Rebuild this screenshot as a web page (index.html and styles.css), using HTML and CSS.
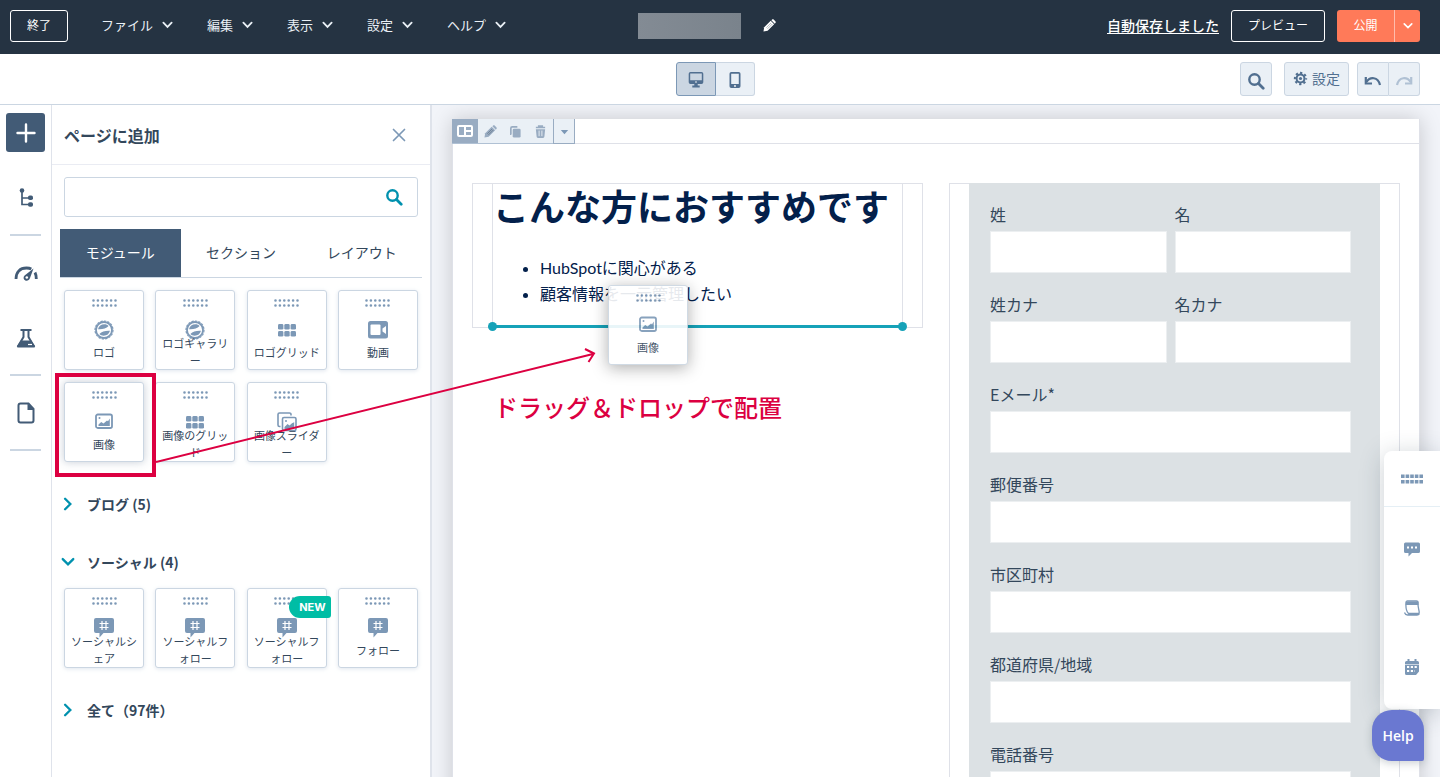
FILE: index.html
```
<!DOCTYPE html>
<html lang="ja">
<head>
    <meta charset="UTF-8">
    <meta name="viewport" content="width=device-width, initial-scale=1.0">
    <title>ページエディター</title>
    <link rel="stylesheet" href="styles.css">
</head>
<body>
    <!-- shared icons -->
    <svg class="sprite" aria-hidden="true">
        <symbol id="chevron" viewBox="0 0 12 8"><path d="M1.5 1.5 6 6l4.500-4.500" fill="none" stroke="currentColor" stroke-width="2" stroke-linecap="round"/></symbol>
        <symbol id="search" viewBox="0 0 18 18"><circle cx="7.500" cy="7.500" r="5.200" fill="none" stroke="currentColor" stroke-width="2.400"/><path d="m11.500 11.500 4.700 4.700" stroke="currentColor" stroke-width="2.800" stroke-linecap="round"/></symbol>
        <symbol id="pencil" viewBox="0 0 14 14"><path d="M.5 13.500 1.300 9 8.300 2l3.700 3.700L5 12.700z" fill="currentColor"/><path d="m9 1.300.6-.6c.6-.6 1.500-.6 2.100 0l1.600 1.600c.6.600.6 1.500 0 2.100l-.6.600z" fill="currentColor"/><path d="m3.600 9.400 5.200-5.200M4.800 10.600 10 5.400" stroke="#253342" stroke-width=".6" opacity=".6"/></symbol>
        <symbol id="dots" viewBox="0 0 25 8"><path d="M1.500 1.500h22.500M1.500 6.500h22.500" fill="none" stroke="#7c98b6" stroke-width="2.600" stroke-linecap="round" stroke-dasharray="0 4.400"/></symbol>
        <symbol id="logo" viewBox="0 0 20 20"><circle cx="10" cy="10" r="8" fill="none" stroke="#7c98b6" stroke-width="1.800"/><circle cx="10" cy="10" r="9" fill="none" stroke="#7c98b6" stroke-width="1.200" stroke-dasharray="2.400 1.100"/><path d="M4 9.200C4.800 6 7.200 4.300 10.300 4.300c1.900 0 3.300.6 4.300 1.700-2.500 2.400-6 3.500-10.600 3.200zM16 10.800c-.8 3.200-3.200 4.900-6.300 4.900-1.900 0-3.300-.6-4.300-1.700 2.500-2.400 6-3.500 10.600-3.200z" fill="#7c98b6"/></symbol>
        <symbol id="grid" viewBox="0 0 20 20"><g fill="#7c98b6"><rect x="1" y="4" width="5.400" height="5.600" rx="1.400"/><rect x="7.300" y="4" width="5.400" height="5.600" rx="1.400"/><rect x="13.600" y="4" width="5.400" height="5.600" rx="1.400"/><rect x="1" y="11" width="5.400" height="5.600" rx="1.400"/><rect x="7.300" y="11" width="5.400" height="5.600" rx="1.400"/><rect x="13.600" y="11" width="5.400" height="5.600" rx="1.400"/></g></symbol>
        <symbol id="video" viewBox="0 0 20 20"><rect y="1" width="20" height="17.500" rx="2.500" fill="#7c98b6"/><rect x="2.500" y="4.500" width="10" height="10.500" rx="1" fill="#fff"/><path d="M18 6v8l-3.500-2.500v-3z" fill="#fff"/></symbol>
        <symbol id="image" viewBox="0 0 20 20"><rect x="2" y="2.500" width="16" height="13.500" rx="1.800" fill="none" stroke="#7c98b6" stroke-width="1.800"/><path d="M4.500 14v-1.500L7.200 10l2.300 1.600 3.500-3 1 .6L15.800 6.500V14z" fill="#7c98b6"/><circle cx="5.500" cy="6" r="1" fill="#7c98b6"/></symbol>
        <symbol id="slider" viewBox="0 0 20 20"><path d="M3.500 14.500H2.500a1.500 1.500 0 0 1-1.500-1.500V2.500A1.500 1.500 0 0 1 2.500 1H12.500A1.500 1.500 0 0 1 14 2.500v1" fill="none" stroke="#7c98b6" stroke-width="1.600"/><rect x="5.500" y="5.500" width="13.500" height="13" rx="1.500" fill="none" stroke="#7c98b6" stroke-width="1.600"/><path d="M7.500 17v-2l3-3 2 1.600 2.500-2.400 2.200-1V17z" fill="#7c98b6"/><circle cx="9" cy="9" r="1" fill="#7c98b6"/></symbol>
        <symbol id="social" viewBox="0 0 20 20"><path d="M2 0h16a2 2 0 0 1 2 2v11a2 2 0 0 1-2 2H9.500L5.500 19.500V15H2a2 2 0 0 1-2-2V2a2 2 0 0 1 2-2z" fill="#7c98b6"/><path d="M8 3v9M12 3v9M5.500 5.500h9M5.500 9.500h9" stroke="#fff" stroke-width="1.200"/></symbol>
    </svg>

    <header class="topbar">
        <div class="topbar-left">
            <button class="btn-outline btn-exit">終了</button>
            <nav class="menu">
                <button>ファイル<svg><use href="#chevron"/></svg></button>
                <button>編集<svg><use href="#chevron"/></svg></button>
                <button>表示<svg><use href="#chevron"/></svg></button>
                <button>設定<svg><use href="#chevron"/></svg></button>
                <button>ヘルプ<svg><use href="#chevron"/></svg></button>
            </nav>
        </div>
        <div class="page-name">
            <span class="name-mask"></span>
            <button class="edit-name" aria-label="名前を編集"><svg><use href="#pencil"/></svg></button>
        </div>
        <div class="topbar-right">
            <a href="#" class="saved">自動保存しました</a>
            <button class="btn-outline btn-preview">プレビュー</button>
            <div class="publish">
                <button class="publish-main">公開</button>
                <button class="publish-more" aria-label="公開オプション"><svg><use href="#chevron"/></svg></button>
            </div>
        </div>
    </header>

    <div class="toolbar">
        <div class="device-switch">
            <button class="active" aria-label="デスクトップ"><svg viewBox="0 0 16 16"><path d="M2.500 0h11A1.800 1.800 0 0 1 15.300 1.800v8.400A1.800 1.800 0 0 1 13.500 12h-11A1.800 1.800 0 0 1 .7 10.200V1.800A1.800 1.800 0 0 1 2.500 0zM2.200 1.500v6.700h11.600V1.500zM6.300 12h3.400v1.500h2V15.500H4.300v-2h2z" fill="#516f90" fill-rule="evenodd"/><circle cx="8" cy="10" r=".8" fill="#fff"/></svg></button>
            <button aria-label="モバイル"><svg viewBox="0 0 16 16"><path d="M4.300 0h7.400a1.800 1.800 0 0 1 1.800 1.800v12.400a1.800 1.800 0 0 1-1.800 1.800H4.300a1.800 1.800 0 0 1-1.800-1.800V1.800A1.800 1.800 0 0 1 4.300 0zM4.200 1.800v10.200h7.600V1.800z" fill="#516f90" fill-rule="evenodd"/><circle cx="8" cy="14" r=".9" fill="#fff"/></svg></button>
        </div>
        <div class="tools">
            <button class="tool tool-search" aria-label="検索"><svg><use href="#search"/></svg></button>
            <button class="tool tool-settings"><svg viewBox="0 0 16 16"><circle cx="8" cy="8" r="4.200" fill="none" stroke="#516f90" stroke-width="2.200"/><circle cx="8" cy="8" r="6" fill="none" stroke="#516f90" stroke-width="2.200" stroke-dasharray="2.400 2.310" stroke-dashoffset="1.200"/><circle cx="8" cy="8" r="1.700" fill="#516f90"/></svg>設定</button>
            <div class="history">
                <button class="tool" aria-label="元に戻す"><svg viewBox="0 0 18 12"><path d="M2.500 7C6 1.500 14 1.500 16 10" fill="none" stroke="#516f90" stroke-width="2.200"/><path d="M1.800 2v6.500H8" fill="none" stroke="#516f90" stroke-width="2.200"/></svg></button>
                <button class="tool" aria-label="やり直す" disabled><svg viewBox="0 0 18 12"><path d="M15.500 7C12 1.500 4 1.500 2 10" fill="none" stroke="#b0c1d4" stroke-width="2.200"/><path d="M16.200 2v6.500H10" fill="none" stroke="#b0c1d4" stroke-width="2.200"/></svg></button>
            </div>
        </div>
    </div>

    <main class="editor">
        <nav class="rail">
            <button class="active" aria-label="追加"><svg viewBox="0 0 24 24"><path d="M12 3.500v17M3.500 12h17" stroke="#fff" stroke-width="2.400" stroke-linecap="round"/></svg></button>
            <button aria-label="コンテンツ構造"><svg viewBox="0 0 24 24"><path d="M8 5v13.500h9M8 12h9" fill="none" stroke="#425b76" stroke-width="1.700"/><circle cx="8" cy="4.500" r="2.300" fill="#425b76"/><rect x="14" y="9.500" width="5" height="4.500" rx="1.800" fill="#425b76"/><rect x="14" y="16.300" width="5" height="4.500" rx="1.800" fill="#425b76"/></svg></button>
            <hr>
            <button aria-label="最適化"><svg viewBox="0 0 24 24"><path d="M2 18c0-7 4-11 10.500-11 2 0 3.500.3 4.800 1M21 11.500c.9 1.800 1.300 3.900 1.300 6.500" fill="none" stroke="#425b76" stroke-width="2.800"/><path d="M19.500 7.500 16 17c-.8 2.200-2.800 3.300-4.700 2.400-2-1-2.300-3.400-.7-5z" fill="#425b76"/><circle cx="12.800" cy="16.500" r="1.300" fill="#fff"/></svg></button>
            <button aria-label="テスト"><svg viewBox="0 0 24 24"><path d="M6.500 4h11M9.500 4v7L4.500 19.500h15L14.500 11V4" fill="none" stroke="#425b76" stroke-width="2"/><path d="M7 14.500h10l3.800 5.200c.5.800 0 1.800-1 1.800H4.200c-1 0-1.500-1-1-1.800z" fill="#425b76"/><path d="M14 18.500h4" stroke="#fff" stroke-width="1.200"/></svg></button>
            <hr>
            <button aria-label="ページ"><svg viewBox="0 0 24 24"><path d="M6.500 2.500h8l5 5.500v11.500a2 2 0 0 1-2 2h-11a2 2 0 0 1-2-2v-15a2 2 0 0 1 2-2z" fill="none" stroke="#425b76" stroke-width="2"/><path d="M13.500 2.500v6.500H20z" fill="#425b76"/></svg></button>
            <hr>
        </nav>

        <aside class="panel">
            <div class="panel-header">
                <h2>ページに追加</h2>
                <button class="close" aria-label="閉じる"><svg viewBox="0 0 14 14"><path d="m1.500 1.500 11 11M12.500 1.500l-11 11" stroke="#7c98b6" stroke-width="1.700" stroke-linecap="round"/></svg></button>
            </div>
            <div class="search-box">
                <input type="text" aria-label="モジュールを検索">
                <svg><use href="#search"/></svg>
            </div>
            <div class="tabs" role="tablist">
                <button class="active" role="tab">モジュール</button>
                <button role="tab">セクション</button>
                <button role="tab">レイアウト</button>
            </div>
            <div class="modules">
                <div class="cards">
                    <button class="card"><svg class="grip"><use href="#dots"/></svg><svg class="icon"><use href="#logo"/></svg><span>ロゴ</span></button>
                    <button class="card"><svg class="grip"><use href="#dots"/></svg><svg class="icon"><use href="#logo"/></svg><span>ロゴギャラリー</span></button>
                    <button class="card"><svg class="grip"><use href="#dots"/></svg><svg class="icon"><use href="#grid"/></svg><span>ロゴグリッド</span></button>
                    <button class="card"><svg class="grip"><use href="#dots"/></svg><svg class="icon"><use href="#video"/></svg><span>動画</span></button>
                    <button class="card picked"><svg class="grip"><use href="#dots"/></svg><svg class="icon"><use href="#image"/></svg><span>画像</span></button>
                    <button class="card"><svg class="grip"><use href="#dots"/></svg><svg class="icon"><use href="#grid"/></svg><span>画像のグリッド</span></button>
                    <button class="card"><svg class="grip"><use href="#dots"/></svg><svg class="icon"><use href="#slider"/></svg><span>画像スライダー</span></button>
                </div>
                <h3><button><svg class="closed"><use href="#chevron"/></svg>ブログ (5)</button></h3>
                <h3><button><svg><use href="#chevron"/></svg>ソーシャル (4)</button></h3>
                <div class="cards cards-social">
                    <button class="card"><svg class="grip"><use href="#dots"/></svg><svg class="icon"><use href="#social"/></svg><span>ソーシャルシェア</span></button>
                    <button class="card"><svg class="grip"><use href="#dots"/></svg><svg class="icon"><use href="#social"/></svg><span>ソーシャルフォロー</span></button>
                    <button class="card"><svg class="grip"><use href="#dots"/></svg><svg class="icon"><use href="#social"/></svg><span>ソーシャルフォロー</span><em class="badge">NEW</em></button>
                    <button class="card"><svg class="grip"><use href="#dots"/></svg><svg class="icon"><use href="#social"/></svg><span>フォロー</span></button>
                </div>
                <h3><button><svg class="closed"><use href="#chevron"/></svg>全て（97件）</button></h3>
            </div>
        </aside>

        <section class="canvas">
            <div class="page">
                <div class="section-bar">
                    <button class="kind" aria-label="セクション"><svg viewBox="0 0 16 12"><path d="M2 0h12a2 2 0 0 1 2 2v8a2 2 0 0 1-2 2H2a2 2 0 0 1-2-2V2a2 2 0 0 1 2-2zM2 2v8h5V2zM9 2v3h5V2zM9 7v3h5V7z" fill="#fff" fill-rule="evenodd"/></svg></button>
                    <button aria-label="編集"><svg><use href="#pencil"/></svg></button>
                    <button aria-label="複製"><svg viewBox="0 0 14 14"><path d="M2.500 10H2V3.500A1.500 1.500 0 0 1 3.500 2H9" fill="none" stroke="#99acc2" stroke-width="1.800"/><rect x="4" y="4" width="8.500" height="9.500" rx="1.500" fill="#99acc2"/></svg></button>
                    <button aria-label="削除"><svg viewBox="0 0 14 14"><path d="M2 2.600h10M5 2.500V1h4v1.500" fill="none" stroke="#99acc2" stroke-width="1.600"/><path d="M2 4.500h10l-.8 8a1.500 1.500 0 0 1-1.500 1.500H4.300a1.500 1.500 0 0 1-1.500-1.500z" fill="#99acc2"/><path d="M5.500 6v6M8.500 6v6" stroke="#eaf0f6" stroke-width="1"/></svg></button>
                    <button class="more" aria-label="その他"><svg viewBox="0 0 14 14"><path d="M3 5.500h8L7 10z" fill="#7c98b6"/></svg></button>
                </div>
                <div class="row">
                    <div class="column">
                        <div class="rich-text">
                            <h1>こんな方におすすめです</h1>
                            <ul>
                                <li>HubSpotに関心がある</li>
                                <li>顧客情報を一元管理したい</li>
                            </ul>
                            <div class="drop-line"></div>
                        </div>
                    </div>
                    <div class="column">
                        <form class="form">
                            <div class="field half"><label for="lastname">姓</label><input type="text" id="lastname"></div>
                            <div class="field half"><label for="firstname">名</label><input type="text" id="firstname"></div>
                            <div class="field half"><label for="lastkana">姓カナ</label><input type="text" id="lastkana"></div>
                            <div class="field half"><label for="firstkana">名カナ</label><input type="text" id="firstkana"></div>
                            <div class="field"><label for="email">Eメール*</label><input type="email" id="email"></div>
                            <div class="field"><label for="zip">郵便番号</label><input type="text" id="zip"></div>
                            <div class="field"><label for="city">市区町村</label><input type="text" id="city"></div>
                            <div class="field"><label for="state">都道府県/地域</label><input type="text" id="state"></div>
                            <div class="field"><label for="phone">電話番号</label><input type="tel" id="phone"></div>
                        </form>
                    </div>
                </div>
            </div>
        </section>
    </main>

    <!-- module being dragged and the notes drawn over the editor -->
    <div class="card dragging"><svg class="grip"><use href="#dots"/></svg><svg class="icon"><use href="#image"/></svg><span>画像</span></div>
    <div class="highlight"></div>
    <svg class="arrow" viewBox="0 0 444 120"><path d="M0 114 437 6M429 1l9 4.500-5.500 8.500" fill="none" stroke="#dc0041" stroke-width="2"/></svg>
    <p class="note">ドラッグ＆ドロップで配置</p>

    <div class="side-dock">
        <button class="dock-grip" aria-label="移動"><svg viewBox="0 0 22 10"><path d="M0 2.300h22M0 7.700h22" stroke="#7c98b6" stroke-width="3.400" stroke-dasharray="3.600 1"/></svg></button>
        <button aria-label="コメント"><svg viewBox="0 0 16 16"><path d="M1.500 1.500h13A1.500 1.500 0 0 1 16 3v7.500a1.500 1.500 0 0 1-1.500 1.500H8l-3.500 3.500V12h-3A1.500 1.500 0 0 1 0 10.500V3a1.500 1.500 0 0 1 1.500-1.500z" fill="#7c98b6"/><path d="M3 6.500h10" stroke="#fff" stroke-width="2" stroke-dasharray="2 2"/></svg></button>
        <button aria-label="ノート"><svg viewBox="0 0 16 16"><path d="M2 2.500C2 1.500 2.500 1 3.500 1h9c1 0 1.500.5 1.500 1.500-.2 5 .8 6 1.200 9.500.1 1-.5 1.500-1.500 1.500H4.500C3 12 1.500 9 2 2.500zM.5 12.500c.5 1.800 1 2.500 3 2.500h9.500c1.500 0 2-.5 2.500-1.500" fill="none" stroke="#7c98b6" stroke-width="1.300"/><path d="M2 1.500h12.500V5H1.700z" fill="#7c98b6"/></svg></button>
        <button aria-label="カレンダー"><svg viewBox="0 0 16 16"><path d="M2.500 2h11A1.500 1.500 0 0 1 15 3.500V12.500L12 16H2.500A1.500 1.500 0 0 1 1 14.500v-11A1.500 1.500 0 0 1 2.500 2z" fill="#7c98b6"/><path d="M4.500 0v3M11.500 0v3" stroke="#7c98b6" stroke-width="2"/><path d="M3 8h10M3 12h8" stroke="#fff" stroke-width="2.200" stroke-dasharray="2.200 1.600"/><path d="M1 5.500h14" stroke="#fff" stroke-width=".6"/></svg></button>
    </div>
    <button class="help">Help</button>
</body>
</html>
```

FILE: styles.css
```
* {
    box-sizing: border-box;
}
body {
    margin: 0;
    height: 100vh;
    display: flex;
    flex-direction: column;
    overflow: hidden;
    position: relative;
    font-family: "Noto Sans CJK JP", sans-serif;
    font-size: 14px;
    color: #33475b;
    background: #fff;
}
button {
    font: inherit;
    color: inherit;
    background: none;
    border: none;
    padding: 0;
    cursor: pointer;
    display: flex;
    align-items: center;
    justify-content: center;
}
svg {
    flex-shrink: 0;
}
.sprite {
    position: absolute;
    width: 0;
    height: 0;
}

/* top bar */
.topbar,
.toolbar {
    display: grid;
    grid-template-columns: 1fr auto 1fr;
    align-items: center;
    padding: 0 20px 0 10px;
    flex-shrink: 0;
}
.topbar {
    height: 54px;
    padding-bottom: 3px;
    background: #253342;
    color: #fff;
    font-size: 13px;
}
.topbar-left,
.topbar-right,
.page-name,
.menu,
.publish,
.tools,
.history,
.device-switch {
    display: flex;
    align-items: center;
}
.btn-outline {
    height: 32px;
    padding-bottom: 2px;
    border: 1px solid #fff;
    border-radius: 3px;
    font-size: 12px;
}
.btn-exit {
    width: 58px;
}
.btn-preview {
    width: 94px;
    margin: 0 12px;
}
.menu {
    gap: 34px;
    margin-left: 33px;
}
.menu button {
    gap: 9px;
    padding-bottom: 2px;
    color: #eaf0f6;
}
.menu svg,
.publish svg {
    width: 12px;
    height: 8px;
}
.menu svg {
    width: 11px;
}
.name-mask {
    width: 103px;
    height: 26px;
    background: linear-gradient(90deg, #838b94, #7a838c);
}
.edit-name {
    padding: 0 16px;
    margin-left: 6px;
}
.edit-name svg,
.section-bar svg {
    width: 13px;
    height: 13px;
}
.topbar-right,
.tools {
    justify-content: flex-end;
}
.saved {
    padding-bottom: 2px;
    color: #fff;
    font-size: 14px;
    font-weight: 500;
    text-underline-offset: 2px;
}
.publish button {
    height: 32px;
    padding-bottom: 2px;
    background: #ff7a59;
    font-size: 12px;
}
.publish .publish-main {
    width: 58px;
    border-right: 1px solid #ffbcac;
    border-radius: 3px 0 0 3px;
}
.publish .publish-more {
    width: 25px;
    padding-bottom: 0;
    border-radius: 0 3px 3px 0;
}
.publish-more svg {
    width: 10px;
}

/* second bar */
.toolbar {
    height: 51px;
    border-bottom: 1px solid #cbd6e2;
}
.device-switch {
    grid-column: 2;
}
.device-switch button {
    width: 39px;
    height: 34px;
    background: #eaf0f6;
    border: 1px solid #cbd6e2;
    border-left: none;
    border-radius: 0 3px 3px 0;
}
.device-switch .active {
    width: 40px;
    background: #cbd6e2;
    border: 1px solid #7c98b6;
    border-radius: 3px 0 0 3px;
}
.device-switch svg {
    width: 16px;
    height: 16px;
    margin-top: 2px;
}
.tool {
    height: 34px;
    background: #eaf0f6;
    border: 1px solid #cbd6e2;
    border-radius: 3px;
    color: #516f90;
}
.tool-search {
    width: 32px;
    margin-right: 12px;
}
.tool-search svg {
    width: 18px;
    height: 18px;
    margin-top: 4px;
}
.tool-settings {
    width: 65px;
    gap: 4px;
    margin-right: 8px;
    padding-bottom: 2px;
}
.tool-settings svg {
    width: 15px;
    height: 15px;
}
.history .tool {
    width: 32px;
    border-radius: 3px 0 0 3px;
}
.history .tool + .tool {
    width: 31px;
    border-left: none;
    border-radius: 0 3px 3px 0;
}
.history svg {
    width: 18px;
    height: 12px;
    margin-top: 4px;
}

.editor {
    flex: 1;
    min-height: 0;
    display: flex;
}

/* icon rail */
.rail {
    width: 52px;
    flex-shrink: 0;
    padding: 8px 6px 0;
    border-right: 1px solid #dfe3eb;
}
.rail button {
    width: 39px;
    height: 39px;
    border-radius: 3px;
}
.rail button + button {
    margin-top: 26px;
}
.rail .active {
    background: #425b76;
}
.rail svg {
    width: 24px;
    height: 24px;
}
.rail hr {
    width: 31px;
    height: 2px;
    margin: 17px auto;
    border: none;
    background: #cbd6e2;
}

/* module panel */
.panel {
    width: 380px;
    flex-shrink: 0;
    border-right: 2px solid #dfe3eb;
    overflow: hidden;
}
.panel-header {
    height: 60px;
    padding: 0 24px 0 12px;
    display: flex;
    align-items: center;
    justify-content: space-between;
    border-bottom: 1px solid #eaecf3;
}
.panel-header h2 {
    margin: 0;
    font-size: 16px;
    font-weight: 700;
}
.close svg {
    width: 14px;
    height: 14px;
}
.search-box {
    margin: 12px 12px 0;
    height: 40px;
    display: flex;
    align-items: center;
    padding-right: 14px;
    border: 1px solid #cbd6e2;
    border-radius: 3px;
    color: #0091ae;
}
.search-box input {
    flex: 1;
    height: 36px;
    padding: 0 10px;
    border: none;
    outline: none;
    font: inherit;
}
.search-box svg {
    width: 18px;
    height: 18px;
}
.tabs {
    margin: 12px 8px 0;
    display: flex;
    height: 49px;
    border-bottom: 1px solid #cbd6e2;
}
.tabs button {
    flex: 1;
    padding-bottom: 3px;
}
.tabs .active {
    background: #425b76;
    color: #fff;
}
.modules {
    padding: 12px 12px 0;
}
.cards {
    display: grid;
    grid-template-columns: repeat(4, 80px);
    justify-content: space-between;
    row-gap: 12px;
}
.cards-social {
    padding-top: 10px;
}
.card {
    position: relative;
    width: 80px;
    height: 80px;
    display: flex;
    flex-direction: column;
    justify-content: flex-start;
    align-items: center;
    padding-top: 8px;
    background: #fff;
    border: 1px solid #cbd6e2;
    border-radius: 3px;
    box-shadow: 0 1px 4px rgba(203, 214, 226, 0.6);
    font-size: 11px;
    line-height: 17px;
    text-align: center;
}
.card.picked {
    box-shadow: 0 0 8px rgba(66, 91, 118, 0.3);
}
.card .grip {
    width: 25px;
    height: 8px;
}
.card .icon {
    width: 20px;
    height: 20px;
    margin-top: 13px;
}
.card span {
    position: relative;
    width: 72px;
    height: 34px;
    margin-top: -5px;
    display: grid;
    align-items: center;
    line-break: anywhere;
}
.badge {
    position: absolute;
    top: 7px;
    right: -5px;
    height: 22px;
    padding: 0 5px 0 10px;
    border-radius: 11px 3px 3px 11px;
    background: #00bda5;
    color: #fff;
    font-family: Inter, sans-serif;
    font-style: normal;
    font-weight: 700;
    line-height: 23px;
}
.modules h3 {
    margin: 26px 0 0;
    font-size: 14px;
    line-height: 32px;
}
.modules h3 button {
    gap: 12px;
    margin-left: -3px;
}
.modules h3 svg {
    width: 14px;
    height: 10px;
    color: #0091ae;
}
.modules h3 .closed {
    transform: rotate(-90deg);
}

/* canvas */
.canvas {
    flex: 1;
    padding: 14px 20px 0;
    background: #f2f4f9;
    overflow: hidden;
}
.page {
    min-height: 100%;
    background: #fff;
    border: 1px solid #dfe1e8;
    border-top: none;
    box-shadow: 0 0 20px rgba(0, 0, 0, 0.18);
}
.section-bar {
    display: flex;
    height: 25px;
    margin-left: -1px;
    border-bottom: 1px solid #dfe1e8;
}
.section-bar button {
    width: 25px;
    height: 25px;
    background: #eaf0f6;
    border-bottom: 1px solid #b0c1d4;
    color: #99acc2;
}
.section-bar .kind {
    width: 26px;
    background: #99acc2;
}
.section-bar .kind svg {
    width: 16px;
    height: 12px;
}
.section-bar .more {
    width: 22px;
    border: 1px solid #99acc2;
    border-top: none;
}
.row {
    display: flex;
    align-items: flex-start;
    gap: 26px;
    padding: 39px 19px;
}
.column {
    flex: 1;
    min-width: 0;
    padding: 0 19px;
    border: 1px solid #dfe1e8;
}
.rich-text {
    position: relative;
    padding-bottom: 20px;
    border-left: 1px solid #dfe1e8;
    border-right: 1px solid #dfe1e8;
    color: #03204b;
}
.rich-text h1 {
    margin: 0;
    font-size: 36px;
    line-height: 43px;
    font-weight: 700;
    white-space: nowrap;
}
.rich-text ul {
    margin: 28px 0 0;
    padding-left: 47px;
    font-family: Lato, "Noto Sans CJK JP", sans-serif;
    font-size: 16px;
    line-height: 26px;
}
/* drop target under the text module */
.drop-line {
    position: absolute;
    left: 0;
    right: 0;
    bottom: -1px;
    height: 3px;
    background: #16a2b8;
}
.drop-line::before,
.drop-line::after {
    content: "";
    position: absolute;
    top: -3px;
    width: 9px;
    height: 9px;
    border-radius: 50%;
    background: #16a2b8;
}
.drop-line::before {
    left: -5px;
}
.drop-line::after {
    right: -5px;
}
.form {
    display: flex;
    flex-wrap: wrap;
    gap: 20px 8px;
    margin-top: -1px;
    padding: 20px 29px 20px 21px;
    background: #dce1e4;
}
.field {
    width: 100%;
}
.field.half {
    width: calc(50% - 4px);
}
.field label {
    display: block;
    margin-bottom: 5px;
    font-size: 16px;
    line-height: 23px;
}
.field input {
    display: block;
    width: 100%;
    height: 42px;
    padding: 0 10px;
    border: 1px solid #eceff1;
    background: #fff;
    font: inherit;
}

/* dragged module and notes */
.card.dragging {
    position: absolute;
    left: 608px;
    top: 285px;
    opacity: 0.9;
    box-shadow: 0 3px 16px rgba(0, 0, 0, 0.35);
}
.highlight {
    position: absolute;
    left: 55px;
    top: 373px;
    width: 101px;
    height: 104px;
    border: 4px solid #dc0041;
}
.arrow {
    position: absolute;
    left: 156px;
    top: 348px;
    width: 444px;
    height: 120px;
    pointer-events: none;
}
.note {
    position: absolute;
    left: 494px;
    top: 389px;
    margin: 0;
    font-size: 24px;
    font-weight: 500;
    line-height: 36px;
    color: #dc0041;
}

/* floating dock */
.side-dock {
    position: absolute;
    right: 0;
    top: 451px;
    width: 56px;
    padding-bottom: 13px;
    background: #fff;
    border-radius: 8px 0 0 8px;
    box-shadow: 0 4px 24px rgba(45, 62, 80, 0.25);
}
.side-dock button {
    width: 100%;
    height: 59px;
}
.side-dock .dock-grip {
    height: 56px;
    margin-bottom: 12px;
    border-bottom: 1px solid #e5eff5;
}
.side-dock svg {
    width: 16px;
    height: 16px;
}
.side-dock .dock-grip svg {
    width: 22px;
    height: 10px;
}
.help {
    position: absolute;
    right: 16px;
    bottom: 16px;
    width: 52px;
    height: 51px;
    border-radius: 20px 20px 2px 20px;
    background: #6a78d1;
    box-shadow: 0 2px 8px rgba(45, 62, 80, 0.25);
    color: #fff;
    font-family: "Open Sans", sans-serif;
    font-weight: 600;
}
```
